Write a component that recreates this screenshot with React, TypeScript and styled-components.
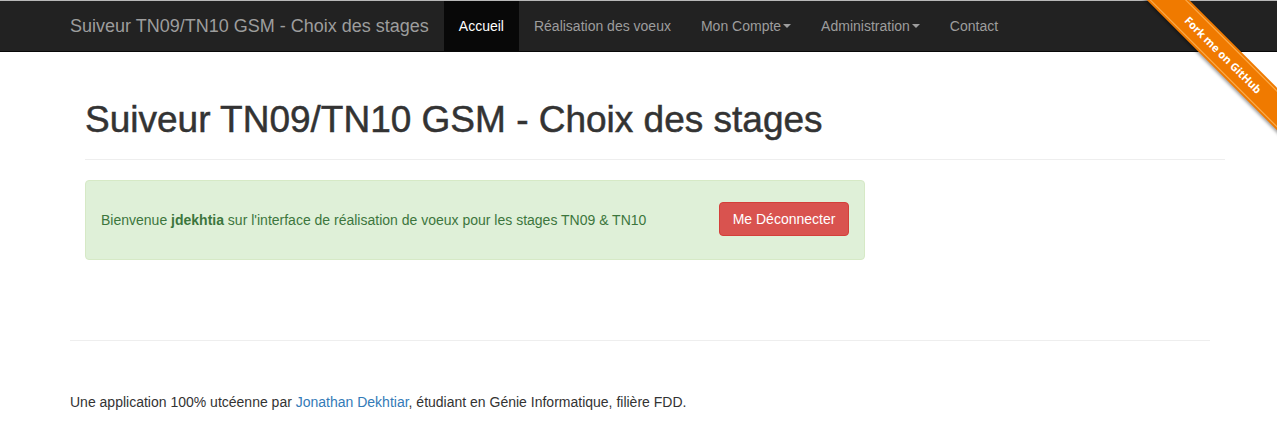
import React from 'react'
import styled, { createGlobalStyle } from 'styled-components'

const GlobalStyle = createGlobalStyle`
  * { box-sizing: border-box; }
  body {
    margin: 0;
    font-family: "Liberation Sans", Arial, sans-serif;
    font-size: 14px;
    line-height: 1.42857;
    color: #333;
    background: #fff;
  }
`

const navItems = [
  { label: 'Accueil', active: true },
  { label: 'Réalisation des voeux' },
  { label: 'Mon Compte', dropdown: true },
  { label: 'Administration', dropdown: true },
  { label: 'Contact' },
]

function App() {
  return (
    <>
      <GlobalStyle />
      <Navbar>
        <NavContainer>
          <Brand href="#">Suiveur TN09/TN10 GSM - Choix des stages</Brand>
          <NavList>
            {navItems.map((item) => (
              <NavItem key={item.label} $active={item.active}>
                {item.label}
                {item.dropdown && <Caret />}
              </NavItem>
            ))}
          </NavList>
        </NavContainer>
      </Navbar>

      <Ribbon>
        <RibbonBand>Fork me on GitHub</RibbonBand>
      </Ribbon>

      <Container>
        <Main>
          <PageHeader>
            <Title>Suiveur TN09/TN10 GSM - Choix des stages</Title>
          </PageHeader>
          <Alert>
            <AlertText>
              Bienvenue <strong>jdekhtia</strong> sur l'interface de réalisation de voeux pour les stages TN09 &amp; TN10
            </AlertText>
            <DangerButton>Me Déconnecter</DangerButton>
          </Alert>
        </Main>

        <Footer>
          <FooterText>
            Une application 100% utcéenne par <FooterLink href="#">Jonathan Dekhtiar</FooterLink>, étudiant en Génie Informatique, filière FDD.
          </FooterText>
        </Footer>
      </Container>
    </>
  )
}

export default App

const Navbar = styled.nav`
  background: #222;
  border-top: 1px solid #b8b8b8;
  border-bottom: 1px solid #080808;
  height: 52px;
`

const NavContainer = styled.div`
  width: 1170px;
  margin-left: calc(50% - 583.5px);
  padding: 0 15px;
  display: flex;
  height: 50px;
`

const Brand = styled.a`
  margin-left: -15px;
  padding: 15px;
  font-size: 18px;
  line-height: 20px;
  color: #9d9d9d;
  text-decoration: none;
  height: 50px;
`

const NavList = styled.ul`
  display: flex;
  list-style: none;
  margin: 0;
  padding: 0;
`

const NavItem = styled.li<{ $active?: boolean }>`
  padding: 15px;
  line-height: 20px;
  height: 50px;
  font-size: 14px;
  color: ${(p) => (p.$active ? '#fff' : '#9d9d9d')};
  background: ${(p) => (p.$active ? '#080808' : 'transparent')};
  display: flex;
  align-items: center;
`

const Caret = styled.span`
  display: inline-block;
  width: 0;
  height: 0;
  margin-left: 2px;
  border-top: 4px solid #9d9d9d;
  border-left: 4px solid transparent;
  border-right: 4px solid transparent;
`

const Ribbon = styled.div`
  position: absolute;
  top: 0;
  right: 0;
  width: 149px;
  height: 149px;
  overflow: hidden;
  pointer-events: none;
`

const RibbonBand = styled.div`
  position: absolute;
  left: -5px;
  top: 40px;
  width: 200px;
  height: 30px;
  transform: rotate(45deg);
  background: #f07a00;
  color: #fff;
  font-family: "Open Sans", "DejaVu Sans", sans-serif;
  font-weight: bold;
  font-size: 11px;
  line-height: 30px;
  text-align: center;
  box-shadow: 0 2px 3px rgba(0, 0, 0, 0.35);
  &::before,
  &::after {
    content: '';
    position: absolute;
    left: 0;
    right: 0;
    height: 1px;
    background: rgba(255, 200, 120, 0.7);
  }
  &::before { top: 2px; }
  &::after { bottom: 2px; }
`

const Container = styled.div`
  width: 1170px;
  margin-left: calc(50% - 583.5px);
  padding: 0 15px;
`

const Main = styled.div`
  padding: 0 15px;
  margin-right: -30px;
`

const PageHeader = styled.div`
  margin: 48px 0 20px;
  padding-bottom: 9px;
  border-bottom: 1px solid #eee;
`

const Title = styled.h1`
  margin: 0 0 10px;
  font-size: 37px;
  font-weight: 500;
  line-height: 39.6px;
  color: #333;
  -webkit-text-stroke: 0.5px #333;
`

const Alert = styled.div`
  width: 780px;
  min-height: 80px;
  padding: 15px;
  background: #dff0d8;
  border: 1px solid #d6e9c6;
  border-radius: 4px;
  color: #3c763d;
  display: flex;
  align-items: center;
  justify-content: space-between;
`

const AlertText = styled.p`
  margin: 3px 0 0;
  font-size: 14px;
`

const DangerButton = styled.button`
  font-family: inherit;
  font-size: 14px;
  line-height: 20px;
  padding: 6px 12px;
  height: 34px;
  width: 130px;
  color: #fff;
  background: #d9534f;
  border: 1px solid #d43f3a;
  border-radius: 4px;
  margin-top: -2px;
`

const Footer = styled.footer`
  margin-top: 80px;
  border-top: 1px solid #eee;
  padding-top: 52px;
`

const FooterText = styled.p`
  margin: 0;
`

const FooterLink = styled.a`
  color: #337ab7;
  text-decoration: none;
`
